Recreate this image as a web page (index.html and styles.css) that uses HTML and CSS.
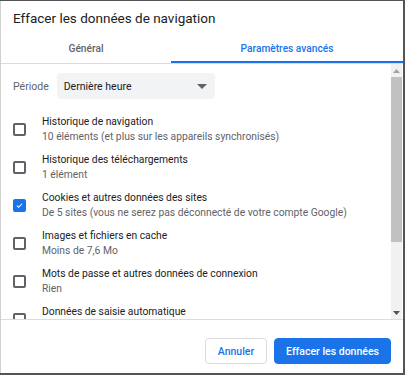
FILE: index.html
```html
<!DOCTYPE html>
<html lang="fr">
<head>
  <meta charset="UTF-8" />
  <title>Effacer les données de navigation</title>
  <link rel="stylesheet" href="styles.css">
</head>
<body>
  <div class="dialog">
    <div class="dialog-title">Effacer les données de navigation</div>

    <div class="tabs">
      <div class="tab">Général</div>
      <div class="tab active">Paramètres avancés</div>
    </div>

    <div class="body">
      <div class="content">
        <div class="period">
          <span class="period-label">Période</span>
          <div class="select">
            <span>Dernière heure</span>
            <svg class="caret" viewBox="0 0 10 5" width="10" height="5"><path d="M0 0h10L5 5z" fill="#5f6368"/></svg>
          </div>
        </div>

        <div class="item">
          <span class="box"></span>
          <div class="item-text">
            <div class="item-title">Historique de navigation</div>
            <div class="item-sub">10 éléments (et plus sur les appareils synchronisés)</div>
          </div>
        </div>
        <div class="item">
          <span class="box"></span>
          <div class="item-text">
            <div class="item-title">Historique des téléchargements</div>
            <div class="item-sub">1 élément</div>
          </div>
        </div>
        <div class="item">
          <span class="box checked">
            <svg viewBox="0 0 14 14" width="13" height="13"><path d="M3 7.2l2.6 2.6L11 4.3" fill="none" stroke="#fff" stroke-width="1.6"/></svg>
          </span>
          <div class="item-text">
            <div class="item-title">Cookies et autres données des sites</div>
            <div class="item-sub">De 5 sites (vous ne serez pas déconnecté de votre compte Google)</div>
          </div>
        </div>
        <div class="item">
          <span class="box"></span>
          <div class="item-text">
            <div class="item-title">Images et fichiers en cache</div>
            <div class="item-sub">Moins de 7,6 Mo</div>
          </div>
        </div>
        <div class="item">
          <span class="box"></span>
          <div class="item-text">
            <div class="item-title">Mots de passe et autres données de connexion</div>
            <div class="item-sub">Rien</div>
          </div>
        </div>
        <div class="item">
          <span class="box"></span>
          <div class="item-text">
            <div class="item-title">Données de saisie automatique</div>
            <div class="item-sub"></div>
          </div>
        </div>
      </div>

      <div class="scrollbar">
        <div class="arrow up"><svg viewBox="0 0 7 4" width="7" height="4"><path d="M0 4h7L3.5 0z" fill="#a3a3a3"/></svg></div>
        <div class="thumb"></div>
        <div class="track"></div>
        <div class="arrow down"><svg viewBox="0 0 7 4" width="7" height="4"><path d="M0 0h7L3.5 4z" fill="#505050"/></svg></div>
      </div>
    </div>

    <div class="footer">
      <button class="btn cancel">Annuler</button>
      <button class="btn primary">Effacer les données</button>
    </div>
  </div>
</body>
</html>
```

FILE: styles.css
```css
/* Chrome-like "clear browsing data" dialog */
body {
  margin: 0;
  background: #545454;
  font-family: Roboto, "Liberation Sans", sans-serif;
  color: #202124;
}
.dialog {
  width: 403px;
  height: 372px;
  margin-top: 1px;
  box-sizing: border-box;
  background: #fff;
  border-left: 1px solid #cfcfcf;
  display: flex;
  flex-direction: column;
}
.dialog-title {
  height: 32px;
  box-sizing: border-box;
  padding: 9px 0 0 12px;
  font-size: 13.5px;
  color: #202124;
}
.tabs {
  display: flex;
  height: 30px;
  border-bottom: 1px solid #dadce0;
}
.tab {
  width: 170px;
  display: flex;
  align-items: center;
  justify-content: center;
  font-size: 10.2px;
  font-weight: 500;
  color: #5f6368;
  box-sizing: border-box;
}
.tab.active {
  flex: 1;
  color: #1a73e8;
  border-bottom: 2px solid #1a73e8;
  padding-top: 2px;
}
.body {
  flex: 1;
  display: flex;
  overflow: hidden;
}
.content {
  flex: 1;
  overflow: hidden;
  padding: 9px 0 0 12px;
}
.period {
  display: flex;
  align-items: center;
  gap: 8px;
  margin-bottom: 11px;
}
.period-label {
  font-size: 10.5px;
  color: #5f6368;
}
.select {
  width: 158px;
  height: 26px;
  box-sizing: border-box;
  background: #f1f3f4;
  border-radius: 4px;
  display: flex;
  align-items: center;
  justify-content: space-between;
  padding: 0 8px 0 7px;
  font-size: 10.5px;
  color: #202124;
}
.item {
  display: flex;
  align-items: center;
  height: 38px;
}
.box {
  width: 13px;
  height: 13px;
  box-sizing: border-box;
  border: 2px solid #5f6368;
  border-radius: 2px;
  margin: 0 16px 0 0;
  flex-shrink: 0;
  display: flex;
  align-items: center;
  justify-content: center;
}
.box.checked {
  background: #1a73e8;
  border-color: #1a73e8;
}
.box svg {
  display: block;
}
.item-title {
  font-size: 10.3px;
  line-height: 15px;
  color: #202124;
  white-space: nowrap;
}
.item-sub {
  font-size: 10.3px;
  line-height: 15px;
  height: 15px;
  color: #5f6368;
  white-space: nowrap;
}
.scrollbar {
  width: 11px;
  margin-right: 1px;
  background: #f1f1f1;
  display: flex;
  flex-direction: column;
}
.arrow {
  height: 13px;
  display: flex;
  align-items: center;
  justify-content: center;
}
.thumb {
  height: 165px;
  background: #c1c1c1;
}
.track {
  flex: 1;
}
.footer {
  height: 54px;
  border-top: 1px solid #dadce0;
  display: flex;
  justify-content: flex-end;
  align-items: flex-start;
  gap: 7px;
  padding: 18px 12px 0 0;
  box-sizing: border-box;
}
.btn {
  height: 26px;
  border-radius: 4px;
  font-family: Roboto, "Liberation Sans", sans-serif;
  font-size: 10.5px;
  font-weight: 500;
  padding: 0;
  white-space: nowrap;
  cursor: pointer;
}
.cancel {
  width: 62px;
  background: #fff;
  color: #1a73e8;
  border: 1px solid #dadce0;
}
.primary {
  width: 117px;
  background: #1a73e8;
  color: #fff;
  border: 1px solid #1a73e8;
}
```
